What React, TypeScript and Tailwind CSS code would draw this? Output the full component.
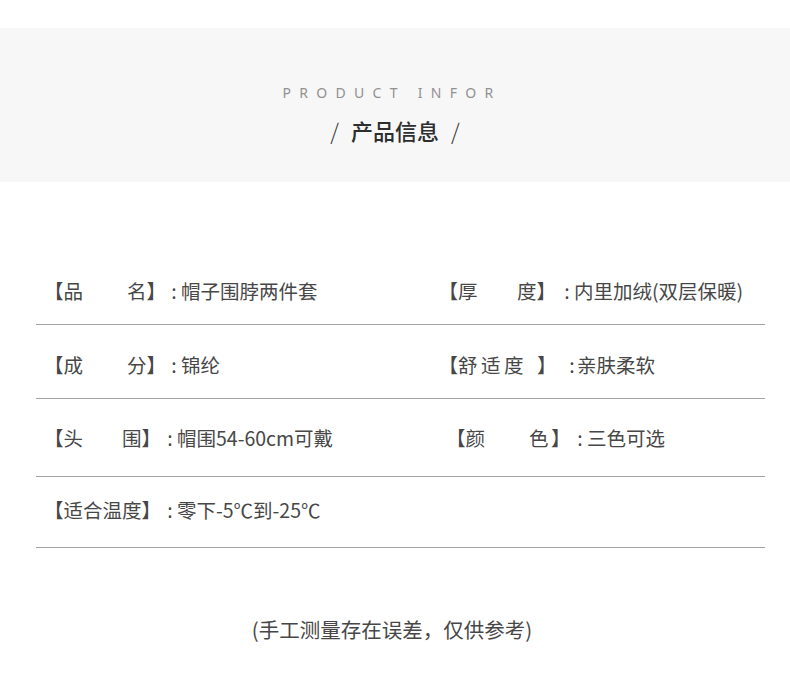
import React from 'react';

type Seg = { t: string; c?: string };
type Row = { c: string; lpl: string; rpl: string; left: Seg[]; right: Seg[] };

const colon = 'w-[8px] text-center';

const rows: Row[] = [
  {
    c: 'h-[67px]',
    lpl: 'pl-[8px]',
    rpl: 'pl-[37.5px]',
    left: [
      { t: '【品' },
      { t: '名】', c: 'ml-[44px]' },
      { t: ':', c: `ml-[4px] ${colon}` },
      { t: '帽子围脖两件套', c: 'ml-[3px]' },
    ],
    right: [
      { t: '【厚' },
      { t: '度】', c: 'ml-[39.5px]' },
      { t: ':', c: `ml-[7px] ${colon}` },
      { t: '内里加绒(双层保暖)', c: 'ml-[3px]' },
    ],
  },
  {
    c: 'h-[74px] pt-[7px]',
    lpl: 'pl-[8px]',
    rpl: 'pl-[37.5px]',
    left: [
      { t: '【成' },
      { t: '分】', c: 'ml-[44px]' },
      { t: ':', c: `ml-[4px] ${colon}` },
      { t: '锦纶', c: 'ml-[3px]' },
    ],
    right: [
      { t: '【舒' },
      { t: '适', c: 'ml-[3.5px]' },
      { t: '度', c: 'ml-[3.5px]' },
      { t: '】', c: 'ml-[13.5px]' },
      { t: ':', c: `ml-[11.5px] ${colon}` },
      { t: '亲肤柔软', c: 'ml-[1px]' },
    ],
  },
  {
    c: 'h-[78px]',
    lpl: 'pl-[8px]',
    rpl: 'pl-[45px]',
    left: [
      { t: '【头' },
      { t: '围】', c: 'ml-[39px]' },
      { t: ':', c: `ml-[5px] ${colon}` },
      { t: '帽围54-60cm可戴', c: 'ml-[3px]' },
    ],
    right: [
      { t: '【颜' },
      { t: '色', c: 'ml-[44px]' },
      { t: '】', c: 'ml-[2.5px]' },
      { t: ':', c: `ml-[5.5px] ${colon}` },
      { t: '三色可选', c: 'ml-[3px]' },
    ],
  },
  {
    c: 'h-[71px] pb-[4px]',
    lpl: 'pl-[8px]',
    rpl: 'pl-[45px]',
    left: [
      { t: '【适合温度】' },
      { t: ':', c: `ml-[5px] ${colon}` },
      { t: '零下-5℃到-25℃', c: 'ml-[3px]' },
    ],
    right: [],
  },
];

const Cell = ({ segs, className }: { segs: Seg[]; className: string }) => (
  <div className={`flex items-center whitespace-nowrap ${className}`}>
    {segs.map((s, i) => (
      <span key={i} className={`inline-block shrink-0 ${s.c ?? ''}`}>
        {s.t}
      </span>
    ))}
  </div>
);

export default function App() {
  return (
    <div className="w-[790px] h-[684px] bg-white overflow-hidden font-['Noto_Sans_CJK_SC',sans-serif]">
      {/* header band */}
      <div className="mt-[28px] h-[154px] bg-[#f7f7f7] flex flex-col items-center">
        <p className="pt-[58px] pr-[6px] text-[14px] leading-[14px] tracking-[8.3px] text-[#919191] font-['Noto_Sans',sans-serif]">
          PRODUCT INFOR
        </p>
        <h2 className="mt-[18px] flex items-center text-[22px] leading-[24px] font-medium text-[#2e2e2e]">
          <span className="font-light">/</span>
          <span className="ml-[12px]">产品信息</span>
          <span className="ml-[12px] font-light">/</span>
        </h2>
      </div>

      {/* spec rows */}
      <div className="mt-[76px] ml-[36px] w-[729px] text-[19.5px] leading-[20px] text-[#474747]">
        {rows.map((r, i) => (
          <div key={i} className={`flex items-center border-b border-[#a3a3a3] box-border ${r.c}`}>
            <Cell segs={r.left} className={`w-[365px] ${r.lpl}`} />
            <Cell segs={r.right} className={`flex-1 ${r.rpl}`} />
          </div>
        ))}
      </div>

      <p className="mt-[69px] pr-[6px] text-center text-[20.5px] leading-[24px] text-[#474747]">
        (手工测量存在误差，仅供参考)
      </p>
    </div>
  );
}
